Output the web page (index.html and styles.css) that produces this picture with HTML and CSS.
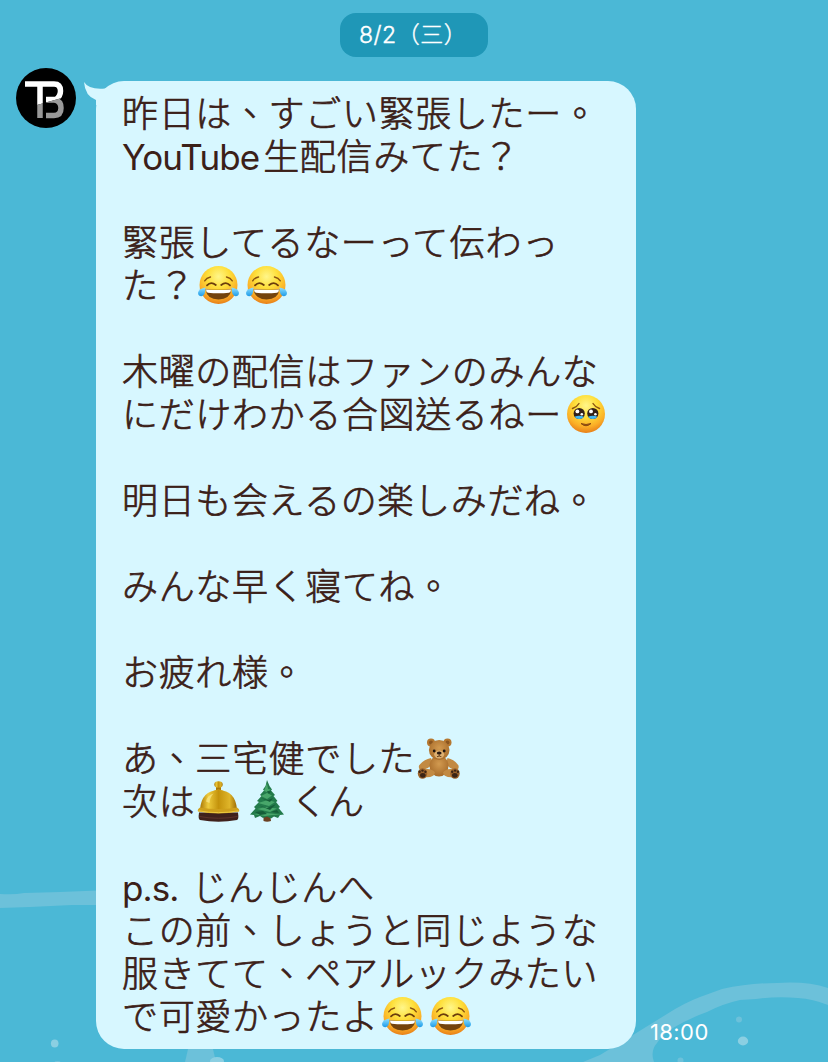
FILE: index.html
```html
<!DOCTYPE html>
<html lang="ja">
<head>
  <meta charset="UTF-8" />
  <meta name="viewport" content="width=device-width, initial-scale=1.0"/>
  <title>Chat</title>
  <link rel="stylesheet" href="styles.css">
</head>
<body>
  <!-- shared emoji drawings -->
  <svg class="defs" width="0" height="0">
    <defs>
      <radialGradient id="face" cx="50%" cy="28%" r="74%">
        <stop offset="0" stop-color="#fff68a"/>
        <stop offset="0.4" stop-color="#fedf3a"/>
        <stop offset="0.75" stop-color="#fbae26"/>
        <stop offset="1" stop-color="#e57a18"/>
      </radialGradient>
      <linearGradient id="tear" x1="0" y1="0" x2="0" y2="1">
        <stop offset="0" stop-color="#8fe0ff"/>
        <stop offset="1" stop-color="#1e9be8"/>
      </linearGradient>
      <linearGradient id="gold" x1="0" y1="0" x2="1" y2="0">
        <stop offset="0" stop-color="#a87505"/>
        <stop offset="0.22" stop-color="#eecb3c"/>
        <stop offset="0.5" stop-color="#c4930c"/>
        <stop offset="0.8" stop-color="#dfb52a"/>
        <stop offset="1" stop-color="#9c6b05"/>
      </linearGradient>
      <radialGradient id="fur" cx="50%" cy="40%" r="60%">
        <stop offset="0" stop-color="#d29a50"/>
        <stop offset="1" stop-color="#a86c2a"/>
      </radialGradient>
    </defs>

    <symbol id="joy" viewBox="-1 -3 48 46">
      <circle cx="22.500" cy="20" r="19" fill="url(#face)"/>
      <path d="M8.700 15.800Q10.500 12.800 14.500 12M36.300 15.800Q34.500 12.800 30.500 12" fill="none" stroke="#8a5210" stroke-width="1.400" stroke-linecap="round"/>
      <path d="M11 20.300Q15 16 19.800 20M34 20.300Q30 16 25.200 20" fill="none" stroke="#6b3d0c" stroke-width="1.800" stroke-linecap="round"/>
      <path d="M9.500 24.300Q22.500 25.300 35.500 24.300Q34 34.500 22.500 34.500Q11 34.500 9.500 24.300Z" fill="#74430c"/>
      <path d="M9.900 24.500Q22.500 25.500 35.100 24.500Q34.800 27.500 33 27.800Q22.500 28.800 12 27.800Q10.200 27.500 9.900 24.500Z" fill="#fff"/>
      <path d="M9.500 22.500Q3 23.300 2 27.800Q2 31.300 5.500 31.200Q9.500 30.500 9.500 22.500Z" fill="url(#tear)"/>
      <path d="M35.500 22.500Q42 23.300 43 27.800Q43 31.300 39.500 31.200Q35.500 30.500 35.500 22.500Z" fill="url(#tear)"/>
    </symbol>

    <symbol id="pleading" viewBox="-1 -3 48 46">
      <circle cx="23" cy="20" r="19" fill="url(#face)"/>
      <path d="M9.500 14.500Q14 13 16 9.500M36.500 14.500Q32 13 30 9.500" fill="none" stroke="#8a5210" stroke-width="1.400" stroke-linecap="round"/>
      <circle cx="16.200" cy="19.500" r="5.600" fill="#332018"/>
      <circle cx="29.800" cy="19.500" r="5.600" fill="#332018"/>
      <path d="M11.500 22.700Q16.200 21 20.900 22.700Q19.700 25.100 16.200 25.100Q12.700 25.100 11.500 22.700ZM25.100 22.700Q29.800 21 34.500 22.700Q33.300 25.100 29.800 25.100Q26.300 25.100 25.100 22.700Z" fill="#43b8f4"/>
      <g fill="#fff">
        <circle cx="14.400" cy="17.400" r="1.900"/>
        <circle cx="28" cy="17.400" r="1.900"/>
        <circle cx="18.800" cy="20.300" r="1.300"/>
        <circle cx="32.400" cy="20.300" r="1.300"/>
      </g>
      <path d="M18 29.500Q23 34 28 29.500Q23 31.500 18 29.500Z" fill="#8a4a10" stroke="#8a4a10" stroke-linejoin="round"/>
    </symbol>

    <symbol id="bear" viewBox="2 -3 48 46">
      <g fill="#b5772f">
        <circle cx="18" cy="4.500" r="4"/>
        <circle cx="34.500" cy="4.500" r="4"/>
      </g>
      <circle cx="18" cy="4.500" r="2" fill="#8a5520"/>
      <circle cx="34.500" cy="4.500" r="2" fill="#8a5520"/>
      <path d="M18 20Q10 22 6 27.500Q5 32.500 10 32Q16 30 20 26ZM34.500 20Q42 22 45.500 27.500Q46.500 32.500 41.500 32Q36 30 33 26Z" fill="#c28a43"/>
      <ellipse cx="26" cy="28" rx="9.500" ry="10.500" fill="url(#fur)"/>
      <path d="M9 31.500Q19 29.500 22 34.500Q21 40.500 10 39ZM43 31.500Q33 29.500 30 34.500Q31 40.500 42 39Z" fill="#c28a43"/>
      <ellipse cx="9.500" cy="35.500" rx="4.700" ry="5.200" fill="#9b622a"/>
      <ellipse cx="42" cy="35.500" rx="4.700" ry="5.200" fill="#9b622a"/>
      <g fill="#3b2415">
        <ellipse cx="9.800" cy="37.300" rx="2.800" ry="2.400"/>
        <ellipse cx="41.800" cy="37.300" rx="2.800" ry="2.400"/>
        <circle cx="6.600" cy="33.700" r="1.200"/><circle cx="9.500" cy="32.600" r="1.200"/><circle cx="12.400" cy="33.700" r="1.200"/>
        <circle cx="39.200" cy="33.700" r="1.200"/><circle cx="42.100" cy="32.600" r="1.200"/><circle cx="44.900" cy="33.700" r="1.200"/>
      </g>
      <ellipse cx="26.200" cy="12" rx="10.300" ry="10" fill="url(#fur)"/>
      <ellipse cx="26.200" cy="16.500" rx="5" ry="4" fill="#ddb071"/>
      <ellipse cx="26.200" cy="15" rx="2.400" ry="1.500" fill="#2b1a12"/>
      <path d="M26.200 16V18M24 18.700Q26.200 17.400 28.400 18.700" fill="none" stroke="#5c3514" stroke-width="0.900"/>
      <circle cx="21.200" cy="13" r="1.400" fill="#1f1511"/>
      <circle cx="31.200" cy="13" r="1.400" fill="#1f1511"/>
    </symbol>

    <symbol id="bell" viewBox="-1.500 -3 48 46">
      <path d="M2.500 31.500Q1.500 38.500 3.500 39Q22 42.500 40.500 39Q42.500 38.500 41.500 31.500Z" fill="#3f211c"/>
      <path d="M3 35.500Q22 39 41 35.500" fill="none" stroke="#5c332b" stroke-width="1"/>
      <rect x="19.500" y="5" width="5" height="5" fill="#a87808"/>
      <ellipse cx="22" cy="3.500" rx="4.200" ry="3.300" fill="url(#gold)"/>
      <path d="M17 10Q22 7 27 10Z" fill="#d8aa20"/>
      <path d="M3.500 28.500Q5 9.500 22 9Q39 9.500 40.500 28.500Z" fill="url(#gold)"/>
      <path d="M3.500 26.500Q22 29.500 40.500 26.500Q43.500 28.500 42.500 30.500Q22 34.500 1.500 30.500Q0.500 28.500 3.500 26.500Z" fill="#cfa01c"/>
      <path d="M2 29.800Q22 33.500 42 29.800" fill="none" stroke="#ecca40" stroke-width="1"/>
      <path d="M9.500 20.500Q10.500 14.500 17 12.500Q13.500 16 13 22Z" fill="#fff3a0" opacity="0.550"/>
    </symbol>

    <symbol id="tree" viewBox="0 -3 48 46">
      <path d="M20.500 33H27L28 40Q24 41.500 20.500 40Z" fill="#6b4022"/>
      <path d="M24 -1L26.500 5L29 8.500L28 9.500L32 14L30.500 15L34.500 20L33 21L37 26L35.500 27L41 33.500L37 34L35 37L31 35.500L28 37.500L24 35.500L20 37L17 35L12 37L11 34L7 33.500L12.500 27.500L11 26L16 21L14 20L18.500 15L17 14L21 9.500L20 8.500L22.500 5Z" fill="#237b4b"/>
      <path d="M24 2L25 8L28 8.500L24 11L21 10ZM24 12L29 14.500L24 18L18 15ZM25 19L32 21L26 25L15 22ZM23 26L34 27.500L27 31L14 28ZM23 32L38 33.500L30 34L22 35L10 33Z" fill="#48a66a"/>
      <path d="M24 10L28 10.500L26 13ZM18 17L25 19L30 17L27 21ZM15 24L24 27L33 23L27 29ZM12 31L20 30L24 33L17 34ZM28 31L34 29L36 32Z" fill="#155d38"/>
    </symbol>
  </svg>

  <!-- wallpaper -->
  <svg class="wallpaper" viewBox="0 0 828 1062">
    <g fill="#6cc1da">
      <path d="M0 894Q14 895 24 893L60 892L110 890V905L72 905L30 907L0 908Z"/>
      <path d="M583 1062L600 1055L633 1035L667 1014Q684 1003 700 997L722 989Q750 983 777 983Q807 981 828 988V1005Q813 999 798 998Q777 996 756 999L740 1000Q722 1004 707 1012Q690 1018 673 1028Q662 1035 657 1043Q650 1051 654 1062Z"/>
      <path d="M189 1045H212L216 1062H185Z"/>
      <circle cx="739" cy="1019.500" r="3"/>
      <circle cx="680.500" cy="1060.500" r="3"/>
      <ellipse cx="57.500" cy="1062" rx="3" ry="1"/>
    </g>
    <g fill="#8bcfe2">
      <ellipse cx="743" cy="1041" rx="5.200" ry="4.400"/>
      <ellipse cx="54.700" cy="1043.500" rx="3.800" ry="4"/>
      <ellipse cx="217" cy="1061" rx="7" ry="4"/>
    </g>
  </svg>

  <main class="chat">
    <div class="date">8/2（三）</div>

    <div class="message">
      <svg class="avatar" viewBox="0 0 60 60">
        <defs>
          <clipPath id="upper"><path d="M0 0H60V26L21 37L0 41Z"/></clipPath>
          <clipPath id="lower"><path d="M0 41L21 37L60 26V60H0Z"/></clipPath>
        </defs>
        <circle cx="30" cy="30" r="30"/>
        <g id="mark" fill="none" stroke-width="5.500">
          <path clip-path="url(#upper)" stroke="#fff" d="M9 16H38Q44.500 16 44.500 23Q44.500 28 40 31.500H30M24 16V50"/>
          <path clip-path="url(#lower)" stroke="#999" d="M24 20V50M30 32H38.500Q45 33 45 40Q45 47.500 38 47.500H30M44.500 23Q44.500 28 40 32"/>
        </g>
      </svg>

      <div class="bubble" lang="zh-Hant">
        <svg class="tail" viewBox="0 0 30 24"><path d="M1 1Q6 9 22 7.500L29 4V24H13V19Q2 15 1 1Z"/></svg>
        <p>昨日は、すごい緊張したー。<br><span class="latin">YouTube</span>生配信みてた？</p>
        <p>緊張してるなーって伝わっ<br>た？<svg class="emoji"><use href="#joy"/></svg><svg class="emoji"><use href="#joy"/></svg></p>
        <p>木曜の配信はファンのみんな<br>にだけわかる合図送るねー<svg class="emoji"><use href="#pleading"/></svg></p>
        <p>明日も会えるの楽しみだね。</p>
        <p>みんな早く寝てね。</p>
        <p>お疲れ様。</p>
        <p>あ、三宅健でした<svg class="emoji"><use href="#bear"/></svg><br>次は<svg class="emoji"><use href="#bell"/></svg><svg class="emoji"><use href="#tree"/></svg>くん</p>
        <p><span class="latin">p.s. </span>じんじんへ<br>この前、しょうと同じような<br>服きてて、ペアルックみたい<br>で可愛かったよ<svg class="emoji"><use href="#joy"/></svg><svg class="emoji"><use href="#joy"/></svg></p>
      </div>

      <time class="time">18:00</time>
    </div>
  </main>
</body>
</html>
```

FILE: styles.css
```css
* {
  box-sizing: border-box;
}

body {
  margin: 0;
  height: 1062px;
  overflow: hidden;
  position: relative;
  background: #4bb8d6;
  font-family: Inter, "Noto Sans CJK TC", sans-serif;
}

.defs {
  position: absolute;
}

.wallpaper {
  position: absolute;
  top: 0;
  left: 0;
  width: 828px;
  height: 1062px;
}

.chat {
  position: relative;
  display: flex;
  flex-direction: column;
  padding-top: 13px;
}

.date {
  align-self: center;
  width: 148px;
  height: 44px;
  padding-left: 19px;
  border-radius: 16px;
  background: #1f97b7;
  color: #fff;
  font-size: 23px;
  font-weight: 300;
  line-height: 44px;
  letter-spacing: 0.5px;
  white-space: nowrap;
  -webkit-text-stroke: 0.4px #fff;
}

.message {
  display: flex;
  align-items: flex-start;
  padding: 11px 0 0 16px;
}

.avatar {
  flex: none;
  width: 60px;
  height: 60px;
}

.bubble {
  position: relative;
  flex: none;
  width: 540px;
  height: 968px;
  margin: 13px 0 0 20px;
  padding: 9px 0 0 26px;
  border-radius: 28px;
  background: #d7f7ff;
  color: #3b2018;
  font-family: "Noto Sans CJK TC", sans-serif;
  font-size: 36px;
  font-weight: 300;
  line-height: 43px;
  letter-spacing: 0.65px;
  white-space: nowrap;
  -webkit-text-stroke: 0.7px #3b2018;
}

.bubble p {
  margin: 0 0 43px;
}

.tail {
  position: absolute;
  top: 0;
  left: -13px;
  width: 30px;
  height: 24px;
  fill: #d7f7ff;
}

.latin {
  margin-right: 4px;
  font-family: Inter, sans-serif;
  font-size: 35px;
  font-weight: 400;
  line-height: 0;
  letter-spacing: -0.9px;
  -webkit-text-stroke: 0;
}

.emoji {
  width: 48px;
  height: 46px;
  margin-bottom: -3px;
  vertical-align: top;
  -webkit-text-stroke: 0;
}

.time {
  align-self: flex-end;
  margin: 0 0 3px 14px;
  color: #fff;
  font-size: 22px;
  line-height: 27px;
  letter-spacing: 0.4px;
}
```
